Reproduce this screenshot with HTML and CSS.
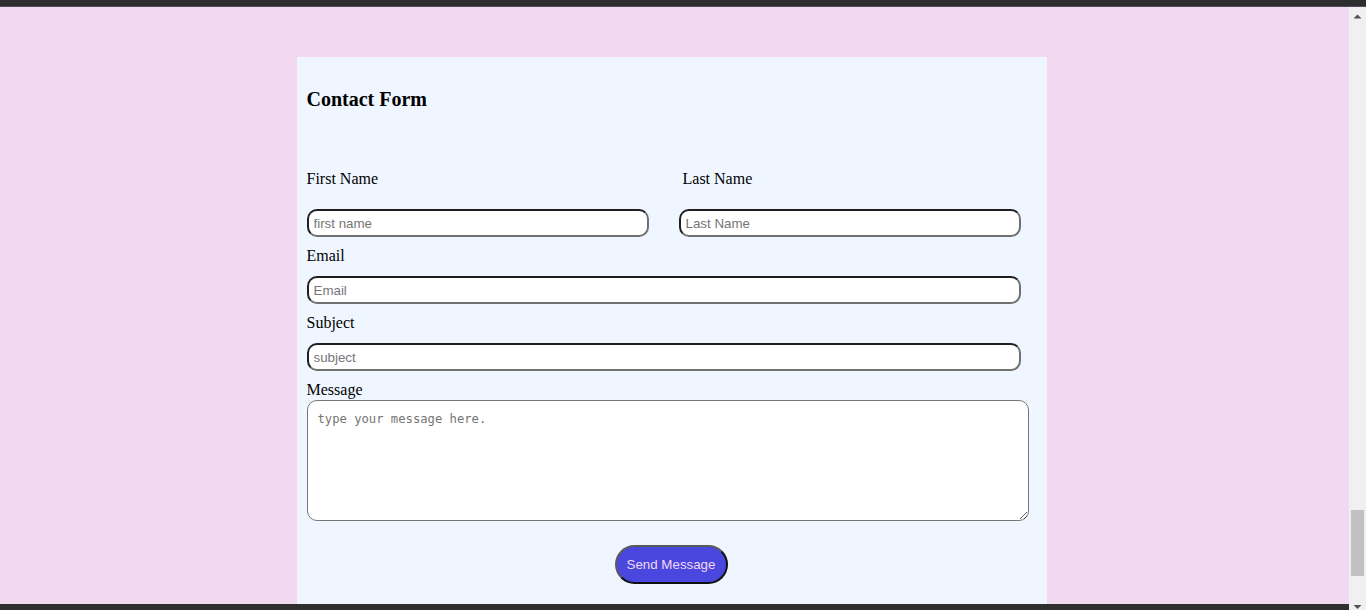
FILE: index.html
```html
<!DOCTYPE html>
<html lang="en">
<head>
<meta charset="utf-8">
<title>Contact Form</title>
<link rel="stylesheet" href="styles.css">
</head>
<body>
  <div class="topbar"></div>
  <div class="frame">
    <div class="viewport">
      <div class="page">
        <form class="card">
          <h3 class="title">Contact Form</h3>
          <div class="name-row">
            <div class="name-col">
              <label class="field-label first-label" for="fname">First Name</label>
              <input class="text-input half" id="fname" type="text" placeholder="first name">
            </div>
            <div class="name-col">
              <label class="field-label first-label last-label" for="lname">Last Name</label>
              <input class="text-input half" id="lname" type="text" placeholder="Last Name">
            </div>
          </div>
          <label class="field-label" for="email">Email</label>
          <input class="text-input full" id="email" type="email" placeholder="Email">
          <label class="field-label" for="subject">Subject</label>
          <input class="text-input full" id="subject" type="text" placeholder="subject">
          <label class="field-label msg-label" for="message">Message</label>
          <textarea class="message" id="message" placeholder="type your message here."></textarea>
          <div class="actions">
            <button class="send" type="button">Send Message</button>
          </div>
        </form>
      </div>
      <div class="bottombar"></div>
    </div>
    <div class="scrollbar" aria-hidden="true">
      <div class="sb-button">
        <svg width="17" height="17" viewBox="0 0 17 17"><path d="M4.5 11.5h8l-4-4z" fill="#505050"/></svg>
      </div>
      <div class="sb-track">
        <div class="sb-thumb"></div>
      </div>
      <div class="sb-button">
        <svg width="17" height="17" viewBox="0 0 17 17"><path d="M4.5 7h8l-4 4z" fill="#505050"/></svg>
      </div>
    </div>
  </div>
</body>
</html>
```
FILE: styles.css
```css
html, body {
  margin: 0;
  padding: 0;
  height: 610px;
  overflow: hidden;
}

body {
  display: flex;
  flex-direction: column;
  font-family: "Liberation Serif", "Times New Roman", serif;
  background: #f2d8f1;
}

.topbar {
  flex: none;
  height: 6px;
  background: #2d2d2d;
  border-bottom: 1px solid #524b55;
}

.frame {
  flex: none;
  height: 608px;
  display: flex;
}

.viewport {
  flex: 1;
  display: flex;
  flex-direction: column;
  background: #f2d8f1;
}

.page {
  height: 597px;
  overflow: hidden;
  display: flex;
  flex-direction: column;
  align-items: center;
  padding-right: 6px;
  box-sizing: border-box;
}

.bottombar {
  height: 11px;
  background: #2f2f2f;
}

.scrollbar {
  flex: none;
  width: 17px;
  display: flex;
  flex-direction: column;
  background: #f0f0f0;
}

.sb-button {
  flex: none;
  height: 17px;
}

.sb-button svg {
  display: block;
}

.sb-track {
  flex: 1;
  display: flex;
  flex-direction: column;
  justify-content: flex-end;
}

.sb-thumb {
  height: 66px;
  margin: 0 2px 22px;
  background: #c1c1c1;
}

.card {
  flex: 1 0 auto;
  box-sizing: border-box;
  width: 750px;
  margin-top: 50px;
  padding: 31px 18px 0 10px;
  background: #eff6ff;
  display: flex;
  flex-direction: column;
  align-items: flex-start;
}

.title {
  margin: 0;
  font-size: 20px;
  line-height: 22px;
  font-weight: bold;
  color: #000;
}

.name-row {
  display: flex;
  gap: 30px;
  margin-top: 60px;
}

.name-col {
  display: flex;
  flex-direction: column;
  align-items: flex-start;
}

.field-label {
  display: block;
  font-size: 16px;
  line-height: 18px;
  color: #000;
  margin-top: 10px;
  margin-bottom: 11px;
}

.first-label {
  margin-top: 0;
  margin-bottom: 21px;
}

.last-label {
  margin-left: 4px;
}

.msg-label {
  margin-bottom: 1px;
}

.text-input {
  box-sizing: border-box;
  height: 28px;
  margin: 0;
  padding: 0 5px;
  border: 2px solid;
  border-color: #1e1e1e #707070 #707070 #1e1e1e;
  border-radius: 10px;
  background: #fff;
  font-family: "Liberation Sans", Arial, sans-serif;
  font-size: 13.33px;
  color: #000;
  outline: none;
}

.text-input::placeholder {
  color: #757575;
}

.half {
  width: 342px;
}

.full {
  width: 714px;
}

.message {
  box-sizing: border-box;
  width: 722px;
  height: 121px;
  margin: 0;
  padding: 11px 10px;
  border: 1px solid #767676;
  border-radius: 10px;
  background: #fff;
  font-family: "DejaVu Sans Mono", "Liberation Mono", monospace;
  font-size: 12.2px;
  line-height: 15px;
  resize: both;
  outline: none;
}

.message::placeholder {
  color: #757575;
}

.actions {
  align-self: stretch;
  display: flex;
  justify-content: center;
  margin-top: 24px;
}

.send {
  box-sizing: border-box;
  width: 113px;
  height: 39px;
  margin-left: 7px;
  padding: 0;
  border: 2px solid;
  border-color: #5a5a5a #101010 #101010 #5a5a5a;
  border-radius: 20px;
  background: #4a47de;
  color: #f2d8f1;
  font-family: "Liberation Sans", Arial, sans-serif;
  font-size: 13.33px;
  cursor: pointer;
}
```
